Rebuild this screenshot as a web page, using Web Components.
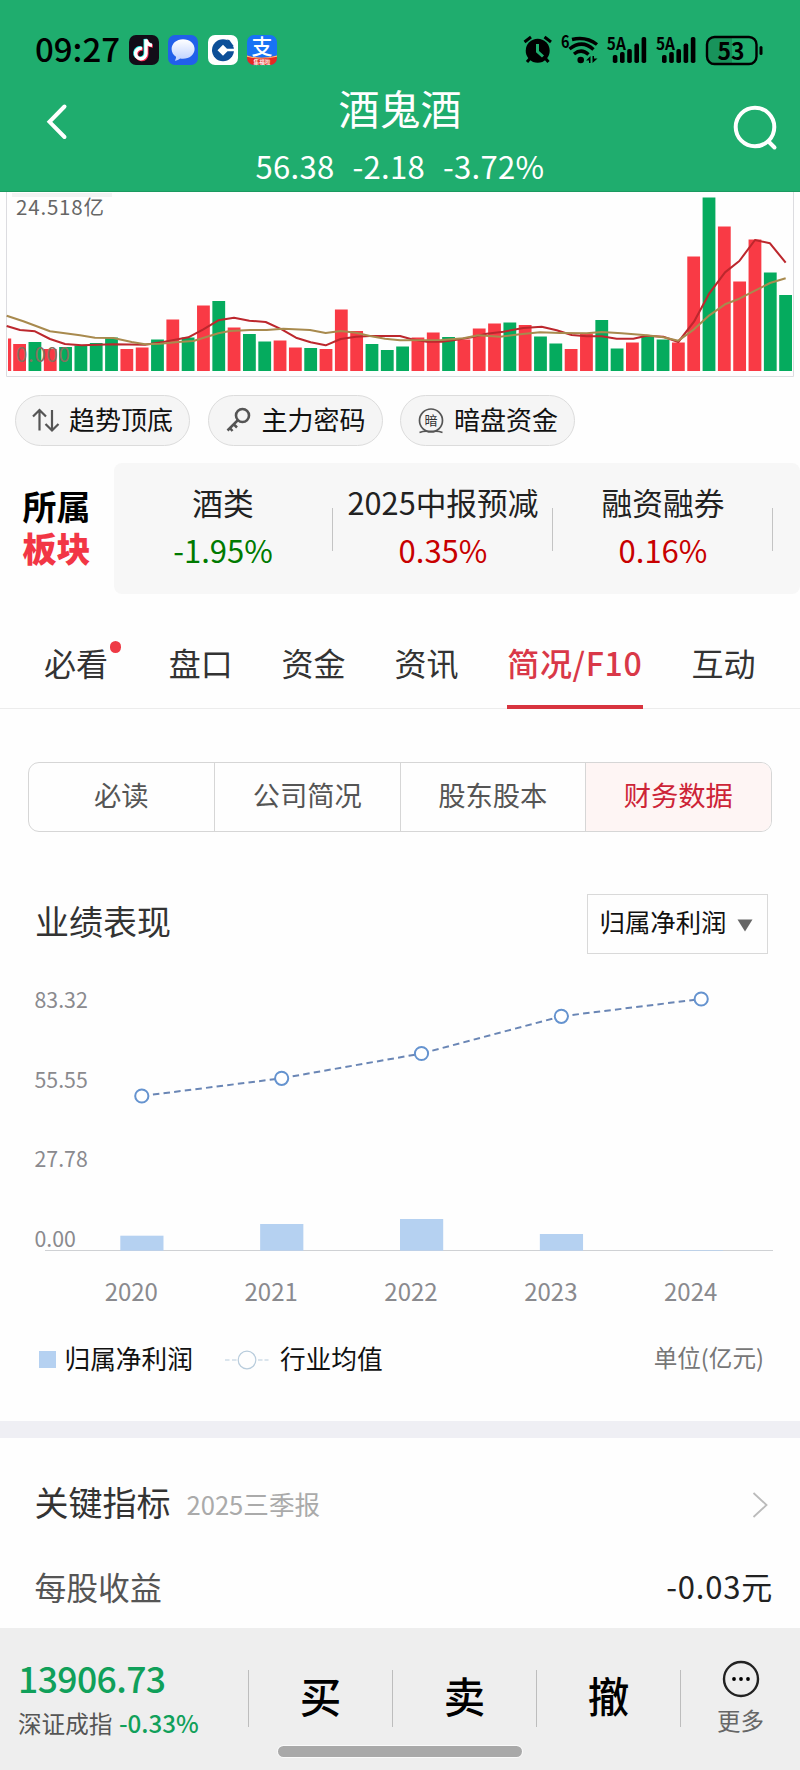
<!DOCTYPE html>
<html lang="zh-CN">
<head>
<meta charset="UTF-8">
<meta name="viewport" content="width=device-width, initial-scale=1">
<title>酒鬼酒</title>
<style>
  body {
    margin: 0;
    width: 800px;
    height: 1770px;
    overflow: hidden;
    background: #fefefe;
    color: #222;
    font-family: "Noto Sans CJK SC", "Noto Sans", sans-serif;
  }
</style>
</head>
<body>
<stock-page></stock-page>

<script>
// base class, every element renders its styles and markup once
class BaseElement extends HTMLElement {
  _shadow = this.attachShadow({ mode: "open" });

  connectedCallback() {
    this._shadow.innerHTML = `<style>* { box-sizing: border-box; } svg { display: block; overflow: visible; } ${this.styles()}</style>${this.markup()}`;
  }

  styles() {
    return "";
  }

  markup() {
    return "<slot></slot>";
  }
}

class StatusBar extends BaseElement {
  styles() {
    return `
      :host { display: flex; align-items: center; height: 72px; padding: 28px 31px 0 35px; color: #000; }
      .time { width: 94px; font-size: 33px; font-weight: 500; line-height: 44px; margin-top: -4px; }
      .apps { display: flex; gap: 9.3px; }
      .state { margin-left: auto; }
      .state text { font-weight: 700; }
      .apps text { font-weight: 500; }
    `;
  }

  signal(x) {
    const tops = [55, 52, 49, 43.5, 37];
    let bars = "";
    tops.forEach((top, i) => {
      bars += `<rect x="${x + i * 7.2}" y="${top}" width="4.6" height="${63 - top}" rx="1.8"/>`;
    });
    return `<text x="${x - 6}" y="50" font-size="17.5" textLength="19" lengthAdjust="spacingAndGlyphs">5A</text>${bars}`;
  }

  markup() {
    return `
      <div class="time">09:27</div>
      <div class="apps">
        <svg width="30" height="30" viewBox="0 0 30 30">
          <rect width="30" height="30" rx="7" fill="#120d18"/>
          <g fill="none" stroke-width="3.4">
            <path d="M13 13.5a5.2 5.2 0 1 0 4 5V4.5c.5 3.500 2.500 5.500 6 5.800" stroke="#25f4ee" transform="translate(-.8 -.6)"/>
            <path d="M13 13.5a5.2 5.2 0 1 0 4 5V4.5c.5 3.500 2.500 5.500 6 5.800" stroke="#fe2c55" transform="translate(.9 .8)"/>
            <path d="M13 13.5a5.2 5.2 0 1 0 4 5V4.5c.5 3.500 2.500 5.500 6 5.800" stroke="#fff"/>
          </g>
        </svg>
        <svg width="30" height="30" viewBox="0 0 30 30">
          <defs><linearGradient id="bub" x2="0" y2="1"><stop stop-color="#fff"/><stop offset="1" stop-color="#bcd0ff"/></linearGradient></defs>
          <rect width="30" height="30" rx="7" fill="#2160ea"/>
          <path d="M15 4.300C8.500 4.300 3.600 8.600 3.600 14c0 3.300 1.700 6 4.400 7.800.2 1.500-.4 2.800-1.200 3.900 2.200-.1 4-.9 5.400-2.100.9.200 1.800.2 2.800.2 6.500 0 11.600-4.300 11.600-9.800S21.500 4.300 15 4.300z" fill="url(#bub)"/>
        </svg>
        <svg width="30" height="30" viewBox="0 0 30 30">
          <rect width="30" height="30" rx="7" fill="#fff"/>
          <circle cx="15" cy="15.200" r="11" fill="#0d4f98"/>
          <path d="M15 9.800l5.500 5.500-5.500 5.500-5.500-5.500zM19 13.700h9v2.600h-9z" fill="#fff"/>
          <path d="M17.500 3.500l8 8.500h3V3z" fill="#fff"/>
          <path d="M18.500 4.600l2.800.4 4.500 6.300-2.800.2z" fill="#0d4f98"/>
        </svg>
        <svg width="30" height="30" viewBox="0 0 30 30">
          <defs><clipPath id="pay"><rect width="30" height="30" rx="7"/></clipPath></defs>
          <g clip-path="url(#pay)">
            <rect width="30" height="30" fill="#1873f5"/>
            <path d="M0 20.500q15 4.500 30 0V30H0z" fill="#e52a21"/>
            <path d="M0 20.500q15 4.500 30 0v1.200q-15 3.600-30 0z" fill="#ffc27a"/>
          </g>
          <text x="15" y="19" font-size="21" text-anchor="middle" fill="#fff">支</text>
          <text x="15" y="28.800" font-size="5.600" text-anchor="middle" fill="#fff">集福啦</text>
        </svg>
      </div>
      <svg class="state" width="246" height="44" viewBox="523 28 246 44">
        <circle cx="537.700" cy="50.700" r="12"/>
        <path d="M524.500 42l6.500-5M551 42l-6.500-5M530 58.500l-3 3.500M545.500 58.500l3 3.500" stroke="#000" stroke-width="3" fill="none"/>
        <path d="M537.500 44v7.500l5.500 5" fill="none" stroke="#1fad6e" stroke-width="3"/>
        <text x="561" y="48" font-size="17" textLength="8.500" lengthAdjust="spacingAndGlyphs">6</text>
        <g fill="none" stroke="#000" stroke-width="3.400">
          <path d="M572 39.500q14-3.500 25 5"/>
          <path d="M569.500 49q12.500-10 24 .5"/>
          <path d="M574 54q7.500-6 14.500.5"/>
        </g>
        <circle cx="580.700" cy="60" r="3.300"/>
        <path d="M586 60.500l4.500-4.500v7h-1.500v-2.500zM597.500 58.500l-5 4.500v-7h1.500v2.500z"/>
        ${this.signal(612.8)}
        ${this.signal(662)}
        <path d="M714.500 38H732v25H714.500Q707 63 707 54.500v-8Q707 38 714.500 38z" fill="#18935b"/>
        <rect x="707" y="37" width="49.500" height="27" rx="7.500" fill="none" stroke="#000" stroke-width="2.400"/>
        <path d="M761 47.500v6" stroke="#000" stroke-width="3" stroke-linecap="round"/>
        <text x="717.500" y="59.500" font-size="23.500" textLength="27" lengthAdjust="spacingAndGlyphs">53</text>
      </svg>
    `;
  }
}

class StockHeader extends BaseElement {
  styles() {
    return `
      :host { display: block; height: 192px; background: #1fad6e; border-bottom: 1px solid #1a9a60; }
      .bar { display: grid; grid-template-columns: 120px 1fr 120px; color: #fff; }
      .mid { display: flex; flex-direction: column; align-items: center; padding-top: 11px; }
      .name { font-size: 41px; line-height: 48px; }
      .quote { display: flex; gap: 18px; margin-top: 17px; font-size: 31px; line-height: 36px; letter-spacing: .3px; }
      path, circle { fill: none; stroke: #fff; stroke-width: 4; stroke-linecap: round; }
    `;
  }

  markup() {
    return `
      <status-bar></status-bar>
      <div class="bar">
        <svg width="120" height="120" viewBox="0 72 120 120"><path d="M64.500 106.500L49.500 121.800l15 15.200"/></svg>
        <div class="mid">
          <div class="name">酒鬼酒</div>
          <div class="quote"><span>56.38</span><span>-2.18</span><span>-3.72%</span></div>
        </div>
        <svg width="120" height="120" viewBox="680 72 120 120"><circle cx="755" cy="127" r="19.300"/><path d="M768.500 141.500l6 6"/></svg>
      </div>
    `;
  }
}

class VolumeChart extends BaseElement {
  // [direction, top of the bar], r = up day, g = down day
  bars = "r344 g342 r349 g347 g345.500 g343 g337.500 r349 r347.500 g339.500 r319.500 g337.500 r305.500 g301 r327.500 g334 g341.500 r340.500 r347.500 g348 r349 r309.500 r331 g344 g350 g346.500 r337.500 r332.500 g337 r339.500 r328.500 r323.500 g322.500 r325 g336.500 g343.500 r349 r333.500 g320 g348.500 r342.500 g336 g339.500 r342.500 r256.500 g197.500 r226.500 r281.500 r239.500 g272.500 g295".split(" ");

  redLine = "20,438 60,450 105,454 150,477 195,492 245,496 340,493 435,494 490,486 565,472 610,448 655,421 702,413 748,422 797,426 845,448 888,473 932,487 977,496 1022,477 1068,470 1110,468 1200,468 1235,478 1280,485 1325,485 1370,479 1415,472 1460,461 1510,455 1570,444 1625,440 1670,451 1715,465 1760,469 1805,469 1850,476 1900,476 1940,467 1990,470 2035,486 2082,425 2128,340 2175,277 2218,243 2265,180 2310,190 2357,248";

  goldLine = "20,407 70,424 150,454 240,466 285,473 340,474 395,486 435,493 480,491 535,486 580,483 655,460 690,453 750,450 800,450 850,446 930,450 977,459 1022,453 1068,458 1110,468 1155,476 1200,481 1325,480 1390,475 1435,466 1500,470 1560,463 1620,457 1680,459 1760,460 1805,456 1865,460 1940,466 1990,472 2035,482 2082,448 2128,406 2175,373 2218,356 2265,332 2310,309 2357,295";

  styles() {
    return `
      :host { display: block; height: 194px; }
      text { fill: #666; font-size: 20.5px; }
    `;
  }

  markup() {
    let barsSVG = `<rect x="8" y="338.500" width="3.200" height="32.500" fill="#f93a45"/>`;

    this.bars.forEach((bar, i) => {
      const top = Number(bar.slice(1));
      barsSVG += `<rect x="${13.2 + i * 15.32}" y="${top}" width="12.800" height="${371 - top}" fill="${bar[0] === "r" ? "#f93a45" : "#05ab5e"}"/>`;
    });

    return `
      <svg width="800" height="194" viewBox="0 192 800 194">
        <path d="M6.500 192V376.500H793.500V192" fill="none" stroke="#dcdce0"/>
        <rect x="12" y="193" width="100" height="4" fill="#f3f3f3"/>
        ${barsSVG}
        <g transform="translate(0 180) scale(.33333)" fill="none" stroke-width="6.200" stroke-linejoin="round">
          <polyline points="${this.redLine}" stroke="#bc272d"/>
          <polyline points="${this.goldLine}" stroke="#a88a4e"/>
        </g>
        <text x="16" y="215" textLength="88">24.518亿</text>
        <text x="16" y="361.500" textLength="54" style="fill: #85705f">0.000</text>
      </svg>
    `;
  }
}

class ToolChip extends BaseElement {
  icons = {
    trend: `<path d="M7.500 27.500V7M1 13.500L7.500 7l6.500 6.500M20 7v20.500M13.500 21l6.500 6.500 6.500-6.500" fill="none" stroke="#555" stroke-width="2.200"/>`,
    key: `<circle cx="18.500" cy="12.500" r="6.500" fill="none" stroke="#555" stroke-width="2.600"/><path d="M13.500 17.500L3.500 27.500M9.500 21l3.500 3.500M5.500 24.500l3 3.500" fill="none" stroke="#555" stroke-width="2.500"/>`,
    dark: `<circle cx="14" cy="17.500" r="11.500" fill="none" stroke="#555" stroke-width="1.700"/><path d="M2.500 29.500q4-1.500 8-1.200h7q4-.3 8 1.200" fill="none" stroke="#555" stroke-width="1.600"/><text x="14" y="22.300" font-size="13" text-anchor="middle" fill="#333">暗</text>`
  };

  styles() {
    return `
      :host { display: flex; align-items: center; width: 175px; height: 51px; padding-left: 15.500px; border: 1px solid #dcdcdc; border-radius: 26px; background: #f5f5f5; box-sizing: border-box; }
      svg { margin-right: 8.500px; }
      span { font-size: 26px; line-height: 40px; margin-top: -4px; color: #111; white-space: nowrap; }
    `;
  }

  markup() {
    return `<svg width="29" height="35" viewBox="0 0 29 35">${this.icons[this.getAttribute("icon")]}</svg><span><slot></slot></span>`;
  }
}

class SectorStrip extends BaseElement {
  sectors = [
    ["酒类", "-1.95%", "down"],
    ["2025中报预减", "0.35%", "up"],
    ["融资融券", "0.16%", "up"]
  ];

  styles() {
    return `
      :host { display: flex; height: 131px; }
      .label { width: 114px; padding: 22px 0 0 22.500px; font-size: 34px; line-height: 41.500px; font-weight: 700; color: #000; }
      .label b { display: block; color: #f23645; }
      .list { flex: 1; display: flex; background: #f7f7f7; border-radius: 8px; overflow: hidden; }
      .cell { flex: 0 0 220px; display: flex; align-items: center; }
      .cell:first-child { margin-left: -1px; }
      .info { flex: 1; text-align: center; font-size: 30.700px; line-height: 48px; margin-top: -5px; white-space: nowrap; }
      .info i { display: block; font-style: normal; font-size: 31px; }
      .cell::after { content: ""; width: 1px; height: 43px; background: #c4c4c4; margin: 2px 0 0 -1px; }
      .up { color: #c80000; }
      .down { color: #007a00; }
    `;
  }

  markup() {
    let cells = "";
    this.sectors.forEach(([name, value, dir]) => {
      cells += `<div class="cell"><div class="info">${name}<i class="${dir}">${value}</i></div></div>`;
    });
    return `<div class="label">所属<b>板块</b></div><div class="list">${cells}</div>`;
  }
}

class PageTabs extends BaseElement {
  styles() {
    return `
      :host { display: flex; justify-content: space-between; height: 75px; margin-top: 40px; padding: 0 44.500px 0 44px; border-bottom: 1px solid #ececec; box-sizing: border-box; font-size: 32px; line-height: 56px; color: #333; }
      .tab { position: relative; height: 75px; white-space: nowrap; }
      .tab.new { margin-right: 12px; }
      .tab.new::after { content: ""; position: absolute; right: -13px; top: 7px; width: 11.500px; height: 11.500px; border-radius: 50%; background: #ee3a45; }
      .tab.on { width: 135.500px; color: #d93848; font-weight: 500; letter-spacing: .7px; border-bottom: 4.500px solid #d8343f; }
    `;
  }

  markup() {
    const tabs = [["必看", "new"], ["盘口", ""], ["资金", ""], ["资讯", ""], ["简况/F10", "on"], ["互动", ""]];
    return tabs.map(([text, cls]) => `<div class="tab ${cls}">${text}</div>`).join("");
  }
}

class SegmentControl extends BaseElement {
  styles() {
    return `
      :host { display: grid; grid-template-columns: repeat(4, 1fr); height: 70px; margin: 53px 28.500px 0 27.500px; border: 1px solid #d6d6d6; border-radius: 11px; overflow: hidden; box-sizing: border-box; }
      div { text-align: center; font-size: 27.300px; line-height: 63px; color: #555; }
      div + div { border-left: 1px solid #d6d6d6; }
      .on { background: #fef5f4; color: #cd2437; }
    `;
  }

  markup() {
    return `<div>必读</div><div>公司简况</div><div>股东股本</div><div class="on">财务数据</div>`;
  }
}

class PerformanceCard extends BaseElement {
  years = [
    { year: 2020, bar: 1235.7, avg: 1096 },
    { year: 2021, bar: 1224, avg: 1078.3 },
    { year: 2022, bar: 1219, avg: 1053.5 },
    { year: 2023, bar: 1234, avg: 1016.3 },
    { year: 2024, bar: 1250, avg: 999 }
  ];

  styles() {
    return `
      :host { display: block; height: 589px; }
      .head { display: flex; justify-content: space-between; padding: 62px 32px 0 35px; height: 121.500px; }
      .title { font-size: 34px; line-height: 53px; color: #333; }
      .select { display: flex; width: 181.500px; height: 59.500px; padding-left: 12px; border: 1px solid #d9d9d9; color: #111; font-size: 25.400px; line-height: 53px; }
      .select svg { margin: 24px 0 0 11px; }
      .axis text { fill: #8a8a8e; font-size: 21.300px; }
      .years text { fill: #8a8a8e; font-size: 24px; text-anchor: middle; }
      .legend { display: flex; align-items: center; height: 50px; padding: 0 36px 0 39px; font-size: 25.700px; color: #111; }
      .legend span { margin-top: -5px; }
      .box { width: 17px; height: 17px; background: #b5d1f1; margin-right: 8.500px; }
      .mark { margin: 0 10.500px 0 32.500px; }
      .legend .unit { margin-left: auto; font-size: 23.600px; color: #777; }
    `;
  }

  markup() {
    let bars = "";
    let labels = "";
    let dots = "";
    let lines = "";

    this.years.forEach((item, i) => {
      const x = 120.300 + i * 139.85;
      bars += `<rect x="${x}" y="${item.bar}" width="43.200" height="${1250.7 - item.bar}" fill="#b5d1f1"/>`;
      labels += `<text x="${131.3 + i * 139.85}" y="1300.500">${item.year}</text>`;
      dots += `<circle cx="${141.8 + i * 139.85}" cy="${item.avg}" r="6.600" fill="#fff" stroke="#6593cf" stroke-width="2"/>`;
      if (i > 0) {
        lines += `<path d="M${141.8 + (i - 1) * 139.85} ${this.years[i - 1].avg}L${141.8 + i * 139.85} ${item.avg}"/>`;
      }
    });

    return `
      <div class="head">
        <div class="title">业绩表现</div>
        <div class="select">归属净利润<svg width="16" height="13" viewBox="0 0 16 13"><path d="M.5.500h15L8 12.500z" fill="#666"/></svg></div>
      </div>
      <svg width="800" height="381" viewBox="0 954 800 381">
        <g class="axis">
          <text x="34.500" y="1007.500">83.32</text>
          <text x="34.500" y="1087.500">55.55</text>
          <text x="34.500" y="1167">27.78</text>
          <text x="34.500" y="1246.500">0.00</text>
        </g>
        <path d="M45 1250.500H773" stroke="#cfd1d4"/>
        ${bars}
        <g fill="none" stroke="#6a86b5" stroke-width="2" stroke-dasharray="6.500 4.200" stroke-dashoffset="-.5">${lines}</g>
        ${dots}
        <g class="years">${labels}</g>
      </svg>
      <div class="legend">
        <div class="box"></div><span>归属净利润</span>
        <svg class="mark" width="44" height="20" viewBox="0 0 44 20">
          <path d="M0 10h4.500M7 10h4.500M33 10h4.500M39.500 10h4" stroke="#b8ccdc" stroke-width="1.200"/>
          <circle cx="22" cy="10" r="8.800" fill="none" stroke="#b8ccdc" stroke-width="1.200"/>
        </svg>
        <span>行业均值</span>
        <span class="unit">单位(亿元)</span>
      </div>
    `;
  }
}

class KeyMetrics extends BaseElement {
  styles() {
    return `
      :host { display: block; height: 207px; border-top: 17px solid #efeff4; box-sizing: border-box; }
      .row { display: flex; align-items: center; padding: 0 28px 0 34.500px; }
      .head { height: 84px; margin-top: 22px; font-size: 34px; line-height: 50px; color: #333; }
      .head small { flex: 1; margin: 4px 0 0 16px; font-size: 25.600px; color: #aaa; }
      .head svg { margin-top: 3px; }
      .item { height: 84px; font-size: 31.800px; line-height: 46px; color: #555; }
      .item span { margin-left: auto; font-size: 31px; letter-spacing: .8px; margin-right: -1px; color: #222; }
    `;
  }

  markup() {
    return `
      <div class="row head"><span>关键指标</span><small>2025三季报</small>
        <svg width="20" height="28" viewBox="0 0 20 28"><path d="M1.500 3l13 12-13 12" fill="none" stroke="#bbb" stroke-width="1.800"/></svg>
      </div>
      <div class="row item">每股收益<span>-0.03元</span></div>
    `;
  }
}

class TradeBar extends BaseElement {
  styles() {
    return `
      :host { display: block; height: 142px; background: #eee; }
      .row { display: flex; align-items: flex-start; height: 118px; }
      .index { width: 248px; padding: 23px 0 0 18px; white-space: nowrap; }
      .index b { display: block; font-size: 35.500px; font-weight: 500; line-height: 54px; letter-spacing: -.6px; color: #10a05a; }
      .index div { font-size: 23.600px; line-height: 36px; color: #555; }
      .index em { font-style: normal; font-weight: 500; font-size: 24.200px; color: #10a05a; margin-left: 6.500px; }
      .btn { flex: 0 0 144px; height: 57px; margin-top: 42px; border-left: 1px solid #bdbdbd; text-align: center; font-size: 41.500px; font-weight: 500; line-height: 51px; color: #000; }
      .more { flex: 1; display: flex; flex-direction: column; align-items: center; margin-top: 32px; font-size: 23.500px; line-height: 36px; color: #666; }
      .line { width: 1px; height: 57px; margin-top: 42px; background: #bdbdbd; }
      .more svg { margin-bottom: 4px; }
      .home { width: 244px; height: 11px; margin: 0 auto; border-radius: 6px; background: #a9a9a9; box-shadow: 0 0 0 1px #fafafa; }
    `;
  }

  markup() {
    return `
      <div class="row">
        <div class="index"><b>13906.73</b><div>深证成指<em>-0.33%</em></div></div>
        <div class="btn">买</div><div class="btn">卖</div><div class="btn">撤</div>
        <div class="line"></div>
        <div class="more">
          <svg width="38" height="38" viewBox="0 0 38 38">
            <circle cx="19" cy="19" r="17" fill="none" stroke="#222" stroke-width="2.400"/>
            <circle cx="12" cy="19" r="1.900"/><circle cx="19" cy="19" r="1.900"/><circle cx="26" cy="19" r="1.900"/>
          </svg>
          更多
        </div>
      </div>
      <div class="home"></div>
    `;
  }
}

class StockPage extends BaseElement {
  styles() {
    return `
      :host { display: block; }
      .chips { display: flex; gap: 17.500px; height: 77px; padding: 9px 0 0 15px; }
    `;
  }

  markup() {
    return `
      <stock-header></stock-header>
      <volume-chart></volume-chart>
      <div class="chips">
        <tool-chip icon="trend">趋势顶底</tool-chip>
        <tool-chip icon="key">主力密码</tool-chip>
        <tool-chip icon="dark">暗盘资金</tool-chip>
      </div>
      <sector-strip></sector-strip>
      <page-tabs></page-tabs>
      <segment-control></segment-control>
      <performance-card></performance-card>
      <key-metrics></key-metrics>
      <trade-bar></trade-bar>
    `;
  }
}

window.customElements.define("status-bar", StatusBar);
window.customElements.define("stock-header", StockHeader);
window.customElements.define("volume-chart", VolumeChart);
window.customElements.define("tool-chip", ToolChip);
window.customElements.define("sector-strip", SectorStrip);
window.customElements.define("page-tabs", PageTabs);
window.customElements.define("segment-control", SegmentControl);
window.customElements.define("performance-card", PerformanceCard);
window.customElements.define("key-metrics", KeyMetrics);
window.customElements.define("trade-bar", TradeBar);
window.customElements.define("stock-page", StockPage);
</script>
</body>
</html>
